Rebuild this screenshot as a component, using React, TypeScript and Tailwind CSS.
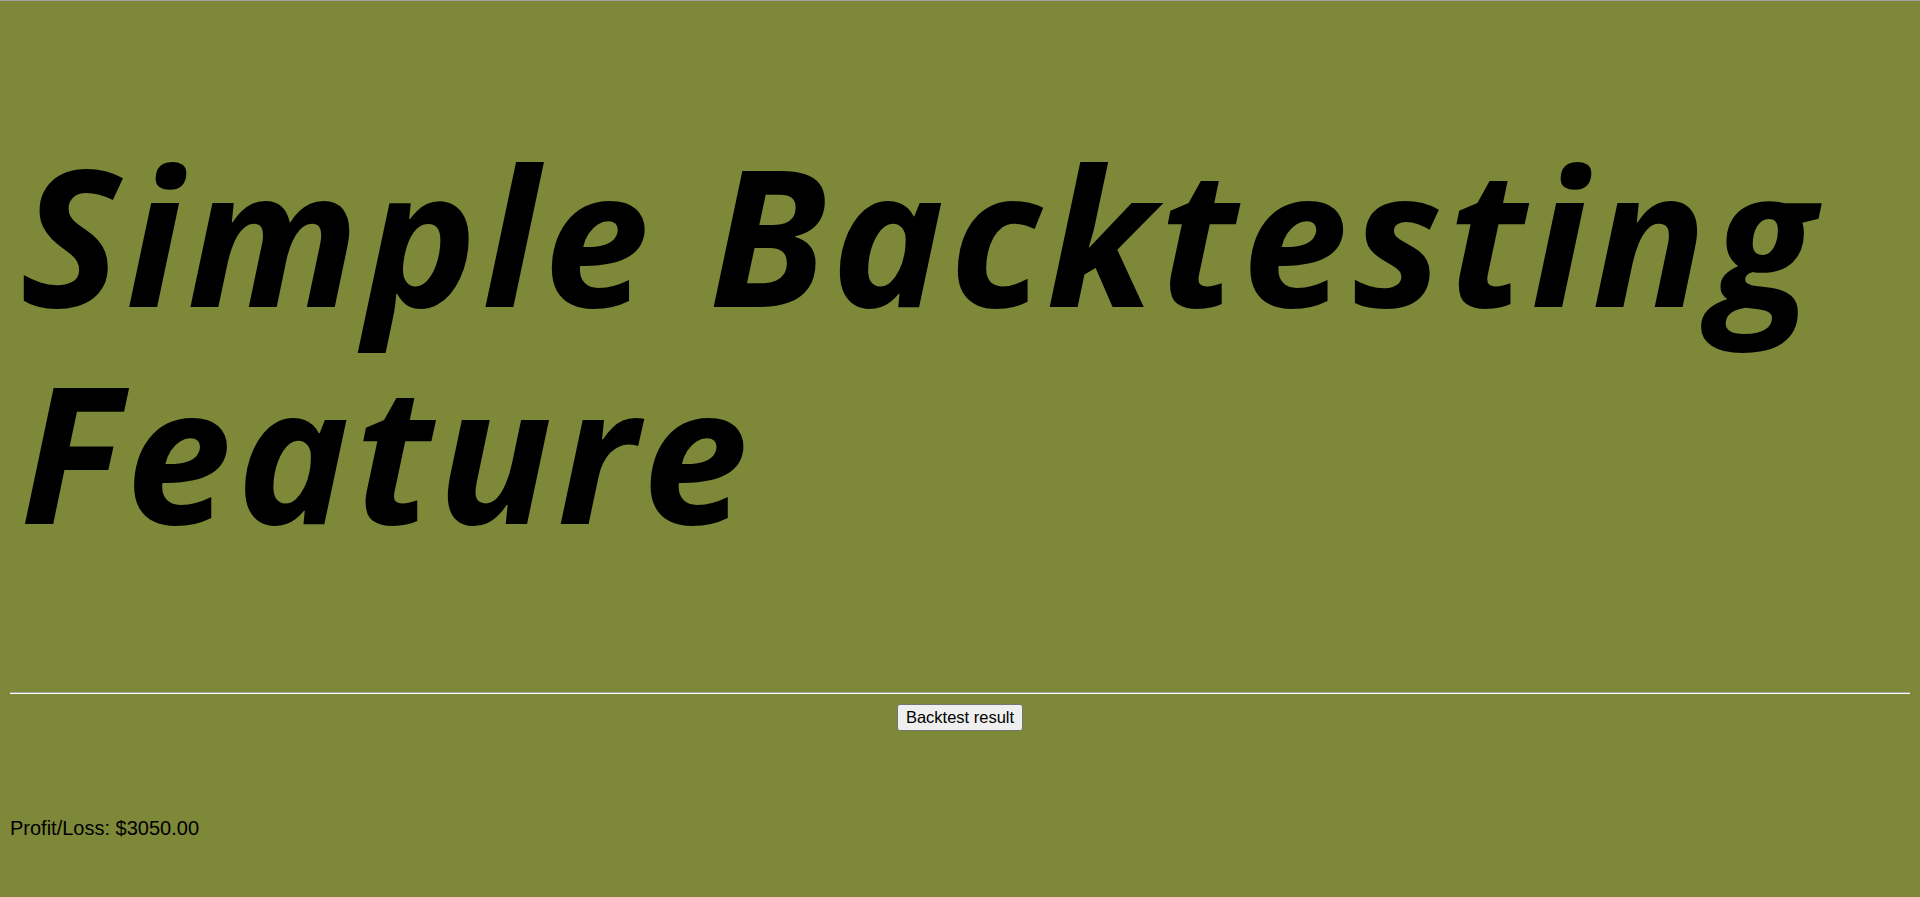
export default function App() {
  return (
    <div className="min-h-[897px] w-full bg-[#7d8838] border-t border-[#a0a0a0] px-[10px] font-['Liberation_Sans',Arial,sans-serif] text-black">
      <h1 className="pt-[124px] pl-[10px] font-['Open_Sans',sans-serif] text-[190px] leading-[217px] tracking-[5px] font-bold italic">
        Simple Backtesting Feature
      </h1>
      <hr className="mt-[133px] border-t border-b border-t-[#a0a0a0] border-b-white" />
      <div className="flex justify-center pt-[10px]">
        <button className="h-[27px] px-[8px] text-[16.5px] leading-none bg-[#efefef] border border-[#767676] rounded-[3px]">
          Backtest result
        </button>
      </div>
      <p className="mt-[86px] text-[20px] leading-[23px]">Profit/Loss: $3050.00</p>
    </div>
  );
}
